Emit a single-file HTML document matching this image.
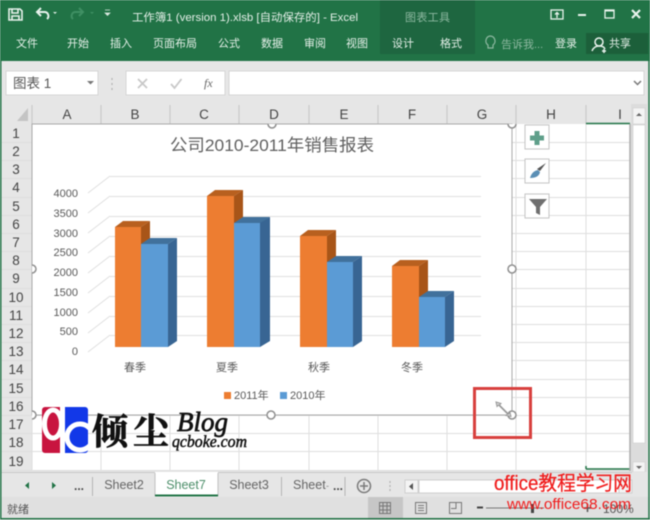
<!DOCTYPE html>
<html lang="zh">
<head>
<meta charset="utf-8">
<style>
html,body{margin:0;padding:0}
body{width:650px;height:520px;overflow:hidden;position:relative;background:#e6e6e6;font-family:"Liberation Sans","Noto Sans CJK SC",sans-serif}
svg{position:absolute;left:0;top:0}
text{font-family:"Liberation Sans","Noto Sans CJK SC",sans-serif}
</style>
</head>
<body>
<svg width="650" height="520" viewBox="0 0 650 520" style="filter:blur(.4px)">
<defs>
<clipPath id="lg"><rect x="42" y="407" width="46" height="46" rx="3"/></clipPath>
<clipPath id="sheet"><rect x="32" y="124" width="598" height="347"/></clipPath>
</defs>
<!-- title/ribbon -->
<rect x="0" y="0" width="650" height="61" fill="#217346"/>
<rect x="380" y="0" width="95" height="54" fill="#1e6640"/>
<rect x="586" y="33" width="64" height="21" fill="#1c5f3a"/>
<g fill="none" stroke="#e8f2ec" stroke-width="1.600">
<path d="M9 9h11l2 2v9H9z"/><path d="M12 9v4h6V9M12 20v-4h7v4"/>
<path d="M41 8l-4 4 4 4M37 12h8a4 4 0 0 1 2 7" stroke-width="2"/>
</g>
<path d="M53 12h4l-2 2z" fill="#dcebe2"/>
<path d="M79 8l4 4-4 4M83 12h-8a4 4 0 0 0-2 7" fill="none" stroke="#3f8f63" stroke-width="2"/>
<path d="M90 12h4l-2 2z" fill="#3f8f63"/>
<path d="M105 10h5M105 13h5l-2.500 2.500z" fill="#dcebe2" stroke="#dcebe2" stroke-width=".7"/>
<g fill="#e4efe8" font-size="11">
<text x="132" y="21" textLength="226" lengthAdjust="spacingAndGlyphs">工作簿1 (version 1).xlsb [自动保存的] - Excel</text>
<text x="405" y="21" fill="#8db8a0" textLength="45">图表工具</text>
<text x="16" y="47">文件</text><text x="67" y="47">开始</text><text x="110" y="47">插入</text>
<text x="153" y="47">页面布局</text><text x="218" y="47">公式</text><text x="261" y="47">数据</text>
<text x="304" y="47">审阅</text><text x="346" y="47">视图</text><text x="392" y="47">设计</text><text x="440" y="47">格式</text>
<text x="555" y="47">登录</text><text x="609" y="47">共享</text>
<text x="501" y="48" fill="#8db8a0">告诉我...</text>
</g>
<path d="M490 36a5 5 0 0 1 3 9v3h-5v-3a5 5 0 0 1 2-9z" fill="none" stroke="#8db8a0" stroke-width="1.200"/>
<circle cx="599" cy="42" r="4" fill="none" stroke="#eaf3ee" stroke-width="1.500"/>
<path d="M592 51q2-5 7-5t6 3M604 49v4M602 51h4" fill="none" stroke="#eaf3ee" stroke-width="1.500"/>
<g fill="none" stroke="#e8f2ec" stroke-width="1.300">
<rect x="551" y="10" width="12" height="9"/><path d="M557 18v-5M555 14.500l2-2 2 2"/>
<path d="M578 15h8" stroke-width="2"/>
<rect x="605" y="10" width="9" height="8"/><path d="M605 10.500h9" stroke-width="2"/>
<path d="M632 10l8 8M640 10l-8 8" stroke-width="2.200"/>
</g>
<!-- formula bar -->
<rect x="0" y="61" width="650" height="63" fill="#e6e6e6"/>
<rect x="6" y="71" width="92" height="24" fill="#fff" stroke="#d6d6d6"/>
<text x="13" y="88" font-size="13.500" fill="#555">图表 1</text>
<path d="M87 81h7l-3.500 3.500z" fill="#777"/>
<path d="M112 78v2M112 83v2M112 88v2" stroke="#b0b0b0" stroke-width="1.200"/>
<rect x="126" y="71" width="99" height="24" fill="#fff" stroke="#d6d6d6"/>
<path d="M138 79l9 9M147 79l-9 9" stroke="#c8c8c8" stroke-width="1.800"/>
<path d="M171 84l3.500 4 7-9" fill="none" stroke="#c8c8c8" stroke-width="1.800"/>
<text x="204" y="87" font-size="12" font-style="italic" fill="#666" style="font-family:'Liberation Serif'">fx</text>
<rect x="229" y="71" width="415" height="24" fill="#fff" stroke="#d6d6d6"/>
<path d="M634 81l3.500 3.500 3.500-3.500" fill="none" stroke="#777" stroke-width="1.500"/>
<!-- headers -->
<rect x="0" y="104" width="632" height="20" fill="#e6e6e6"/>
<path d="M28 108v13H17z" fill="#c4c4c4"/>
<g stroke="#c6c6c6" stroke-width="1" fill="none">
<path d="M32 105v19M101 105v19M170 105v19M239 105v19M309 105v19M378 105v19M447 105v19M516 105v19M586 105v19"/>
</g>
<g font-size="13.500" fill="#444" text-anchor="middle">
<text x="67" y="119">A</text><text x="135" y="119">B</text><text x="204" y="119">C</text><text x="274" y="119">D</text>
<text x="344" y="119">E</text><text x="412" y="119">F</text><text x="482" y="119">G</text><text x="551" y="119">H</text><text x="620" y="119">I</text>
</g>
<g font-size="13.500" fill="#444" text-anchor="middle">
<text x="16" y="138">1</text><text x="16" y="156">2</text><text x="16" y="174">3</text><text x="16" y="192">4</text><text x="16" y="211">5</text>
<text x="16" y="229">6</text><text x="16" y="247">7</text><text x="16" y="265">8</text><text x="16" y="283">9</text><text x="16" y="302">10</text>
<text x="16" y="320">11</text><text x="16" y="338">12</text><text x="16" y="356">13</text><text x="16" y="374">14</text><text x="16" y="393">15</text>
<text x="16" y="411">16</text><text x="16" y="429">17</text><text x="16" y="447">18</text><text x="16" y="466">19</text>
</g>
<!-- grid -->
<rect x="32" y="124" width="598" height="347" fill="#fff"/>
<g stroke="#dedede" stroke-width="1" fill="none">
<path d="M32 124v347M101 124v347M170 124v347M239 124v347M309 124v347M378 124v347M447 124v347M516 124v347M586 124v347"/>
<path d="M0 142.500h630M0 160.500h630M0 178.500h630M0 197.500h630M0 215.500h630M0 233.500h630M0 251.500h630M0 269.500h630M0 288.500h630M0 306.500h630M0 324.500h630M0 342.500h630M0 360.500h630M0 379.500h630M0 397.500h630M0 415.500h630M0 433.500h630M0 451.500h630M0 470.500h630"/>
</g>
<path d="M586 123.500h44M586 469h44M586 469v-3" stroke="#217346" stroke-width="1.500" fill="none"/>
<path d="M630 124v347" stroke="#ababab" stroke-width="1.500"/>
<!-- chart -->
<rect x="32" y="124" width="480" height="291" fill="#fff" stroke="#a9a9a9"/>
<g stroke="#e0e0e0" stroke-width="1" fill="none">
<path d="M110 176.500H481M110 196.500H481M110 216.500H481M110 236.500H481M110 256.500H481M110 276.500H481M110 296.500H481M110 316.500H481M110 335.500H481"/>
<path d="M88 193L110 176M88 213L110 196M88 233L110 216M88 253L110 236M88 273L110 256M88 293L110 276M88 313L110 296M88 333L110 316M88 352L110 335"/>
</g>
<text x="170" y="151" font-size="17" fill="#606060" textLength="204" lengthAdjust="spacingAndGlyphs">公司2010-2011年销售报表</text>
<g font-size="11" fill="#595959" text-anchor="end">
<text x="78" y="197">4000</text><text x="78" y="217">3500</text><text x="78" y="237">3000</text><text x="78" y="256">2500</text><text x="78" y="276">2000</text>
<text x="78" y="296">1500</text><text x="78" y="316">1000</text><text x="78" y="335">500</text><text x="78" y="355">0</text>
</g>
<!-- bars -->
<g>
<path d="M115 227l8-6h27l-9 6z" fill="#b8601f"/><path d="M141 227l9-6v120l-9 6z" fill="#a85518"/><rect x="115" y="227" width="26" height="120" fill="#ed7d31"/>
<path d="M141 244l9-6h27l-9 6z" fill="#41719c"/><path d="M168 244l9-6v103l-9 6z" fill="#386593"/><rect x="141" y="244" width="27" height="103" fill="#5b9bd5"/>
<path d="M207 196l8-6h28l-9 6z" fill="#b8601f"/><path d="M234 196l9-6v151l-9 6z" fill="#a85518"/><rect x="207" y="196" width="27" height="151" fill="#ed7d31"/>
<path d="M234 223l9-6h27l-9 6z" fill="#41719c"/><path d="M260 223l10-6v124l-10 6z" fill="#386593"/><rect x="234" y="223" width="26" height="124" fill="#5b9bd5"/>
<path d="M300 236l8-6h28l-9 6z" fill="#b8601f"/><path d="M327 236l9-6v111l-9 6z" fill="#a85518"/><rect x="300" y="236" width="27" height="111" fill="#ed7d31"/>
<path d="M327 262l9-6h26l-9 6z" fill="#41719c"/><path d="M353 262l9-6v85l-9 6z" fill="#386593"/><rect x="327" y="262" width="26" height="85" fill="#5b9bd5"/>
<path d="M392 266l8-6h28l-9 6z" fill="#b8601f"/><path d="M419 266l9-6v81l-9 6z" fill="#a85518"/><rect x="392" y="266" width="27" height="81" fill="#ed7d31"/>
<path d="M419 297l9-6h26l-9 6z" fill="#41719c"/><path d="M445 297l9-6v50l-9 6z" fill="#386593"/><rect x="419" y="297" width="26" height="50" fill="#5b9bd5"/>
</g>
<g font-size="11" fill="#595959" text-anchor="middle">
<text x="135" y="371">春季</text><text x="227" y="371">夏季</text><text x="319" y="371">秋季</text><text x="412" y="371">冬季</text>
</g>
<rect x="224" y="392" width="7" height="7" fill="#ed7d31"/>
<rect x="280" y="392" width="7" height="7" fill="#5b9bd5"/>
<g font-size="11" fill="#595959"><text x="234" y="399">2011年</text><text x="290" y="399">2010年</text></g>
<!-- handles -->
<g fill="#fff" stroke="#8f8f8f" stroke-width="1.500" clip-path="url(#sheet)">
<circle cx="272" cy="124" r="4"/><circle cx="512" cy="124" r="4"/><circle cx="32" cy="269" r="4"/><circle cx="512" cy="269" r="4"/>
<circle cx="32" cy="415" r="4"/><circle cx="271" cy="415" r="4"/><circle cx="512" cy="415" r="4"/>
</g>
<!-- side buttons -->
<g fill="#fff" stroke="#c4c4c4">
<rect x="525" y="125" width="24" height="24"/><rect x="525" y="159" width="24" height="24"/><rect x="525" y="194" width="24" height="24"/>
</g>
<path d="M534.500 131h5v4.500h4.500v5h-4.500v4.500h-5v-4.500H530v-5h4.500z" fill="#5f9f8a"/>
<path d="M546 163l-6 8-3-2z" fill="#555"/>
<path d="M530 178q2-7 8-8l2 2q-1 6-10 6z" fill="#5b8fb5"/>
<path d="M529 199h18l-7 8v8l-4-2v-6z" fill="#6f6f6f"/>
<!-- resize cursor -->
<path d="M496 402l5 1.500-1.500 1.500 9 9 1.500-1.500 1 4-5-1 1.500-1.500-9-9-1.500 1.500z" fill="#d8d8d8" stroke="#999" stroke-width="1"/>
<rect x="474.500" y="388.500" width="56" height="49" fill="none" stroke="#d8403e" stroke-width="3"/>
<!-- logo -->
<g clip-path="url(#lg)">
<rect x="42" y="407" width="23" height="46" fill="#c8143f"/>
<rect x="65" y="407" width="23" height="46" fill="#1238e8"/>
<ellipse cx="53" cy="424" rx="8.500" ry="14" fill="#c8143f" stroke="#fff" stroke-width="5"/>
<rect x="60" y="407" width="5" height="46" fill="#fff"/>
<circle cx="80" cy="437" r="13" fill="#1238e8" stroke="#fff" stroke-width="5"/>
<path d="M88 426l6 8v8l-6 5z" fill="#fff"/>
</g>
<g fill="#111">
<text x="92" y="444" font-size="36" font-weight="bold" stroke="#111" stroke-width=".7" style="font-family:'Noto Serif CJK SC'">倾</text>
<text x="133" y="444" font-size="36" font-weight="bold" stroke="#111" stroke-width=".7" style="font-family:'Noto Serif CJK SC'">尘</text>
<text x="177" y="431" font-size="27" font-style="italic" stroke="#111" stroke-width=".7" style="font-family:'Liberation Serif'" textLength="51" lengthAdjust="spacingAndGlyphs">Blog</text>
<text x="172" y="447" font-size="17" font-style="italic" stroke="#111" stroke-width=".5" style="font-family:'Liberation Serif'" textLength="75" lengthAdjust="spacingAndGlyphs">qcboke.com</text>
</g>
<!-- scrollbar -->
<rect x="631" y="104" width="16" height="368" fill="#dcdcdc"/>
<rect x="633" y="125" width="12" height="318" fill="#fff" stroke="#cfcfcf" stroke-width=".6"/>
<rect x="633" y="108" width="12" height="16" fill="#f4f4f4" stroke="#cfcfcf" stroke-width=".6"/>
<path d="M636 116h6l-3-3z" fill="#666"/>
<rect x="633" y="462" width="12" height="10" fill="#f4f4f4" stroke="#cfcfcf" stroke-width=".6"/>
<path d="M636 466h6l-3 3z" fill="#666"/>
<!-- tabs -->
<rect x="0" y="472" width="650" height="25" fill="#e6e6e6"/>
<path d="M0 472.500h632" stroke="#c8c8c8"/>
<path d="M29 482v7l-4-3.500z" fill="#217346"/><path d="M52 482v7l4-3.500z" fill="#217346"/>
<text x="74" y="490" font-size="12" font-weight="bold" fill="#444">...</text>
<path d="M92.500 477v19M281.500 477v19M345 477v19" stroke="#b4b4b4"/>
<rect x="155" y="472" width="63" height="25" fill="#fff"/>
<path d="M155 473v23M218 473v23" stroke="#c0c0c0"/>
<path d="M155 495.500h63" stroke="#217346" stroke-width="2"/>
<g font-size="12.500" text-anchor="middle">
<text x="124" y="489" fill="#666">Sheet2</text><text x="186" y="489" fill="#217346" opacity=".8">Sheet7</text><text x="249" y="489" fill="#666">Sheet3</text>
</g>
<text x="293" y="489" font-size="12.500" fill="#666">Sheet</text><text x="326" y="489" font-size="9" fill="#888">-</text>
<text x="333" y="490" font-size="12" font-weight="bold" fill="#444">...</text>
<circle cx="364" cy="486" r="6.500" fill="none" stroke="#7a7a7a" stroke-width="1.500"/>
<path d="M360 486h8M364 482v8" stroke="#7a7a7a" stroke-width="1.500"/>
<path d="M390 481v2M390 485v2M390 489v2" stroke="#b0b0b0" stroke-width="1.200"/>
<rect x="405" y="480" width="13" height="13" fill="#f4f4f4" stroke="#cfcfcf"/>
<path d="M413 483v7l-4-3.500z" fill="#555"/>
<rect x="419" y="480" width="200" height="13" fill="#fff" stroke="#cfcfcf"/>
<rect x="619" y="480" width="13" height="13" fill="#f4f4f4" stroke="#cfcfcf"/>
<!-- status -->
<rect x="0" y="497" width="650" height="21" fill="#e0e0e0"/>
<text x="7" y="513" font-size="11" fill="#555">就绪</text>
<rect x="368" y="497" width="35" height="21" fill="#c6c6c6"/>
<g fill="none" stroke="#777" stroke-width="1">
<path d="M379.500 502.500h11v11h-11zM379.500 506h11M379.500 510h11M383 502.500v11M387 502.500v11"/>
<rect x="415.500" y="502.500" width="11" height="11"/><path d="M418 505.500h6M418 508h6M418 510.500h6"/>
<path d="M449.500 502.500h12v11h-12zM456 502.500v6h-5"/>
</g>
<path d="M477 508h6M486 508h58" stroke="#777"/><path d="M477 507.500h6" stroke="#444" stroke-width="2"/>
<rect x="531" y="504" width="3" height="9" fill="#444"/>
<path d="M584 508h7M587.500 504v8" stroke="#555" stroke-width="1.500"/>
<text x="603" y="513" font-size="12" fill="#555">100%</text>
<!-- frame -->
<path d="M.75 61v458M649 0v519M0 518.800h650" stroke="#217346" stroke-width="1.500" fill="none"/>
<!-- watermark -->
<text x="494" y="490" font-size="20" fill="#f01c1c" stroke="#f01c1c" stroke-width=".25" textLength="138" lengthAdjust="spacingAndGlyphs">office教程学习网</text>
<text x="507" y="509" font-size="15" fill="#f01c1c" textLength="124" lengthAdjust="spacingAndGlyphs">www.office68.com</text>
</svg>
</body>
</html>
